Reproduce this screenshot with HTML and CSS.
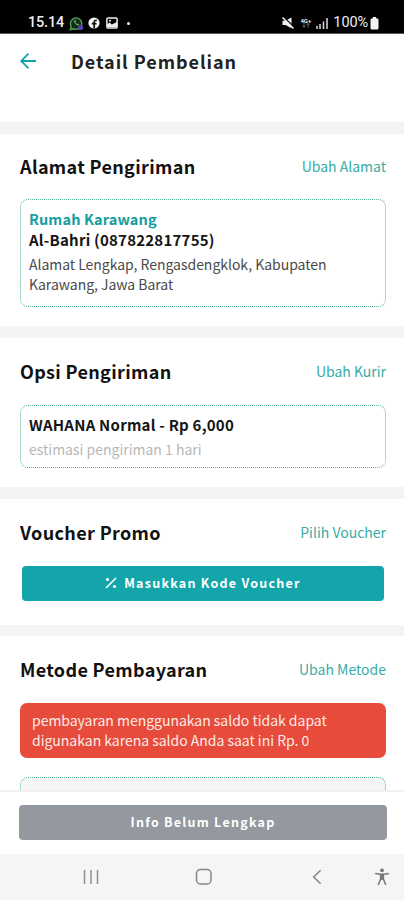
FILE: index.html
```html
<!DOCTYPE html>
<html lang="id">
<head>
<meta charset="utf-8">
<title>Detail Pembelian</title>
<link rel="stylesheet" href="styles.css">
</head>
<body>
<div class="screen">
  <div class="status">
    <span class="time">15.14</span>
    <svg class="i-wa" width="15" height="15" viewBox="0 0 15 15"><path d="M1.3 13.7l.9-3.1A5.7 5.7 0 1 1 4.6 12.800z" fill="#182b1b" stroke="#52a85a" stroke-width="1.3"/><path d="M5.200 4.300c-.9 2 2 5.500 4.500 5.200l.6-1.300-1.600-.8-.8.6-1.400-1.600.5-.8-.6-1.500z" fill="#58ad60"/><circle cx="11.700" cy="11.500" r="2.600" fill="#5b3fae"/></svg>
    <svg class="i-fb" width="12" height="12" viewBox="0 0 12 12"><circle cx="6" cy="6" r="5.600" fill="#f4f4f4"/><path d="M6.200 11.500V5.200c0-1.500.8-2 2.600-1.800M3.800 6.700h4.600" fill="none" stroke="#111" stroke-width="1.700"/></svg>
    <svg class="i-pic" width="12" height="12" viewBox="0 0 12 12"><rect x=".9" y=".9" width="10.200" height="10.200" rx="1.200" fill="none" stroke="#eee" stroke-width="1.500"/><path d="M1 10V7.500l2.600-2 2.200 2L11 5v5z" fill="#eee"/><circle cx="4" cy="3.700" r="1" fill="#eee"/></svg>
    <span class="dot"></span>
    <span class="grow"></span>
    <svg class="i-mute" width="12" height="12" viewBox="0 0 12 12"><path d="M.5 3.800h3L9.500.5v10.800L3.500 8H.5z" fill="#f2f2f2"/><path d="M1.500 0L12 10" stroke="#000" stroke-width="1.300"/><path d="M.5 .5L11.500 11.500" stroke="#f2f2f2" stroke-width="1.500"/></svg>
    <span class="net"><b>4G+</b><svg width="8" height="5" viewBox="0 0 8 5"><path d="M2 0v4M.6 2.800L2 4.300l1.400-1.500M6 4.500V.5M4.600 1.800L6 .4l1.400 1.400" fill="none" stroke="#888" stroke-width=".8"/></svg></span>
    <svg class="i-sig" width="12" height="11" viewBox="0 0 12 11"><path d="M1 8v3M4 6v5M7.500 3.500V11M11 0v11" stroke="#ddd" stroke-width="1.500"/></svg>
    <span class="pct">100%</span>
    <svg class="i-bat" width="9" height="13" viewBox="0 0 9 13"><path d="M2.800 0h3.400v1.500h1A1.300 1.300 0 0 1 8.500 2.800v8.400a1.300 1.300 0 0 1-1.300 1.300H1.800A1.300 1.300 0 0 1 .5 11.200V2.800a1.300 1.300 0 0 1 1.300-1.300h1z" fill="#f4f4f4"/></svg>
  </div>

  <header class="topbar">
    <svg width="18" height="18" viewBox="0 0 18 18"><path d="M16 9H1.500M8.500 1.700L1.200 9l7.300 7.300" fill="none" stroke="#12a5a8" stroke-width="1.800"/></svg>
    <h1>Detail Pembelian</h1>
  </header>

  <main class="content">
    <section class="card address">
      <div class="head"><h2>Alamat Pengiriman</h2><a>Ubah Alamat</a></div>
      <div class="box">
        <p class="place">Rumah Karawang</p>
        <p class="strong">Al-Bahri (087822817755)</p>
        <p class="detail">Alamat Lengkap, Rengasdengklok, Kabupaten<br>Karawang, Jawa Barat</p>
      </div>
    </section>
    <section class="card courier">
      <div class="head"><h2>Opsi Pengiriman</h2><a>Ubah Kurir</a></div>
      <div class="box">
        <p class="strong">WAHANA Normal - Rp 6,000</p>
        <p class="muted">estimasi pengiriman 1 hari</p>
      </div>
    </section>
    <section class="card voucher">
      <div class="head"><h2>Voucher Promo</h2><a>Pilih Voucher</a></div>
      <button class="btn teal"><svg width="12" height="12" viewBox="0 0 12 12"><path d="M1 11L11 1" stroke="#fff" stroke-width="1.600"/><circle cx="2.500" cy="2.500" r="1.600" fill="#fff"/><circle cx="9.500" cy="9.500" r="1.600" fill="#fff"/></svg><span>Masukkan Kode Voucher</span></button>
    </section>
    <section class="card payment">
      <div class="head"><h2>Metode Pembayaran</h2><a>Ubah Metode</a></div>
      <div class="alert">pembayaran menggunakan saldo tidak dapat<br>digunakan karena saldo Anda saat ini Rp. 0</div>
      <div class="box partial"></div>
    </section>
  </main>

  <footer class="action"><button class="btn gray">Info Belum Lengkap</button></footer>

  <nav class="nav">
    <svg width="16" height="16" viewBox="0 0 16 16"><path d="M1.500 1v14M8 1v14M14.500 1v14" stroke="#8e8e8e" stroke-width="1.500"/></svg>
    <svg width="18" height="18" viewBox="0 0 18 18"><rect x="1.500" y="1.500" width="14.500" height="14.500" rx="4" fill="none" stroke="#858585" stroke-width="1.500"/></svg>
    <svg width="10" height="16" viewBox="0 0 10 16"><path d="M8.700 1.300L1.700 8l7 6.700" fill="none" stroke="#858585" stroke-width="1.500"/></svg>
    <svg width="16" height="18" viewBox="0 0 16 18"><circle cx="8" cy="2.300" r="1.900" fill="#777"/><path d="M1.200 5.400Q8 7 14.800 5.400M6.600 6v5L4.200 17M9.400 6v5l2.400 6M6.600 11h2.800" fill="none" stroke="#777" stroke-width="1.500"/><path d="M6 6h4v5.500H6z" fill="#777"/></svg>
  </nav>
</div>
</body>
</html>
```
FILE: styles.css
```css
* { box-sizing: border-box; }
body { margin: 0; background: #fff; }
h1, h2, p { margin: 0; }
.screen {
  width: 404px; height: 900px; overflow: hidden;
  display: flex; flex-direction: column;
  font-family: "Noto Sans CJK SC", "Noto Sans", sans-serif;
  color: #151515;
}
.status {
  flex: none; height: 34px; padding: 13px 25px 0 28px;
  background: #000; border-bottom: 1px solid #555; color: #eee;
  display: flex; align-items: center;
  font-family: Roboto, sans-serif; font-size: 14.5px; line-height: 20px;
}
.time { width: 36px; margin-right: 5px; font-weight: 500; white-space: nowrap; letter-spacing: -0.2px; }
.i-fb { margin-left: 4px; }
.i-pic { margin-left: 6px; }
.dot { width: 3px; height: 3px; margin-left: 9px; border-radius: 50%; background: #eee; }
.grow { flex: 1; }
.net { width: 13px; margin: 0 4px 0 5px; font-size: 6px; line-height: 5px; display: flex; flex-direction: column; align-items: center; }
.pct { margin: 0 2px 0 5px; letter-spacing: -0.1px; }
.topbar {
  flex: none; height: 88px; padding: 18px 20px 0;
  display: flex; align-items: flex-start;
}
.topbar svg { margin-right: 33px; }
h1 { margin-top: -1px; font-size: 18px; line-height: 20px; font-weight: 700; letter-spacing: 0.95px; color: #222; }
.content {
  flex: none; height: 668px; padding-top: 12px; overflow: hidden;
  background: #f4f4f4; display: flex; flex-direction: column; gap: 12px;
}
.card { flex: none; background: #fff; padding: 19px 18px 0 20px; }
.address { height: 192px; padding-top: 18px; }
.courier { height: 149px; }
.voucher { height: 126px; }
.payment { height: 170px; margin-top: -1px; }
.head { height: 28px; display: flex; justify-content: space-between; align-items: center; }
h2 { font-size: 18px; line-height: 28px; font-weight: 700; letter-spacing: 0.34px; color: #111; }
.head a { font-size: 14px; line-height: 28px; color: #38aca5; }
.box { border: 1px dotted #4fb39a; border-radius: 8px; margin-top: 20px; padding: 8px 8px 0; }
.address .box { height: 108px; margin-top: 19px; }
.courier .box { height: 63px; }
.place, .strong { font-size: 14.5px; line-height: 21px; font-weight: 700; }
.place { color: #159da0; letter-spacing: 0.12px; }
.strong { font-size: 15px; letter-spacing: 0.22px; }
.detail { margin-top: 5px; font-size: 14px; line-height: 19.5px; letter-spacing: -0.03px; color: #4a4a4a; white-space: nowrap; }
.muted { font-size: 14px; line-height: 20px; margin-top: 4px; color: #b8b8b8; }
.btn {
  display: flex; align-items: center; justify-content: center;
  border: 0; border-radius: 4px; height: 35px; padding: 0;
  color: #fff; font-family: inherit; font-size: 12.5px; line-height: 20px; font-weight: 700; letter-spacing: 1.25px;
}
.teal { width: 362px; margin: 20px 0 0 2px; padding-bottom: 2px; gap: 7px; background: #13a5a9; }
.gray { width: 368px; background: #94989f; padding-bottom: 2px; }
.alert {
  height: 55px; margin-top: 20px; padding: 7px 12px; border-radius: 7px;
  background: #e64b3c; color: #ffeae5; font-size: 14px; line-height: 20px; letter-spacing: -0.02px; white-space: nowrap;
}
.partial { height: 60px; margin-top: 19px; background: #f5f6f6; }
.action { flex: none; height: 64px; padding: 13px 17px 0 19px; border-top: 2px solid #f0f0f1; background: #fff; }
.nav {
  flex: none; height: 46px; background: #f5f5f5; padding: 0 14px 0 83px;
  display: flex; align-items: center;
}
.nav svg:nth-child(2) { margin-left: 96px; }
.nav svg:nth-child(3) { margin-left: 99px; }
.nav svg:nth-child(4) { margin-left: 52px; }
```
